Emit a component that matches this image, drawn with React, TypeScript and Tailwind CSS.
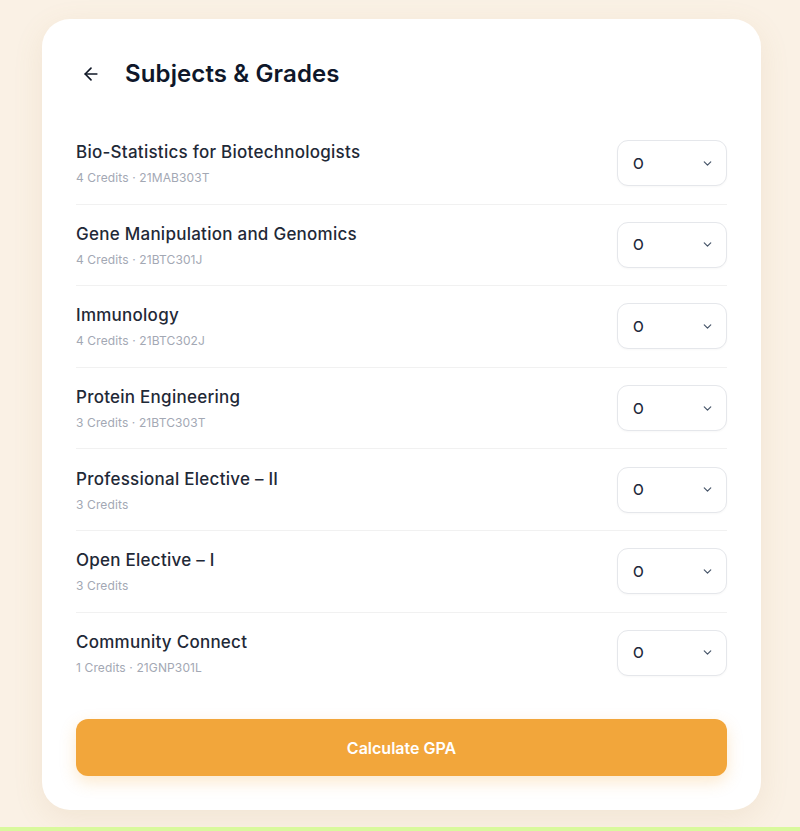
import { ArrowLeft, ChevronDown } from 'lucide-react'

type Subject = { name: string; credits: number; code?: string }

const subjects: Subject[] = [
  { name: 'Bio-Statistics for Biotechnologists', credits: 4, code: '21MAB303T' },
  { name: 'Gene Manipulation and Genomics', credits: 4, code: '21BTC301J' },
  { name: 'Immunology', credits: 4, code: '21BTC302J' },
  { name: 'Protein Engineering', credits: 3, code: '21BTC303T' },
  { name: 'Professional Elective – II', credits: 3 },
  { name: 'Open Elective – I', credits: 3 },
  { name: 'Community Connect', credits: 1, code: '21GNP301L' },
]

function GradeSelect() {
  return (
    <div className="flex h-[46px] w-[110px] items-center justify-between rounded-[11px] border border-[#e5e7eb] bg-white pl-[15px] pr-[12px] shadow-[0_1px_2px_rgba(0,0,0,0.03)]">
      <span className="text-[14px] font-medium text-[#1e293b]">O</span>
      <ChevronDown size={13} strokeWidth={2.2} className="text-[#475569]" />
    </div>
  )
}

export default function App() {
  return (
    <div className="flex min-h-[831px] flex-col bg-[#faf1e5] font-['Inter',sans-serif]">
      <div className="flex-1 px-[42px] pt-[19px]">
        <div className="w-[719px] rounded-[28px] bg-white px-[34px] pt-[37px] pb-[34px] shadow-[0_8px_30px_rgba(180,140,80,0.12)]">
          <div className="mb-[31px] flex items-center gap-[15px]">
            <button className="flex h-[32px] w-[34px] items-center justify-start pl-[5px] text-[#111827]">
              <ArrowLeft size={20} strokeWidth={2} />
            </button>
            <h1 className="text-[24px] font-semibold tracking-[0.005em] text-[#0f172a]">Subjects &amp; Grades</h1>
          </div>

          <div className="flex flex-col">
            {subjects.map((s, i) => (
              <div
                key={s.name}
                className={`flex items-center justify-between py-[17.3px] ${i < subjects.length - 1 ? 'border-b border-[#f1f1f1]' : ''}`}
              >
                <div className="mt-[2px] flex flex-col gap-[8px]">
                  <span className="text-[17px] font-medium leading-[20px] tracking-[0.015em] text-[#1f2937]">{s.name}</span>
                  <span className="text-[12px] leading-[16px] tracking-[0.01em] text-[#a3a8b4]">
                    {s.credits} Credits{s.code ? ` · ${s.code}` : ''}
                  </span>
                </div>
                <GradeSelect />
              </div>
            ))}
          </div>

          <button className="mt-[26px] flex h-[57px] w-full items-center justify-center rounded-[12px] bg-[#f2a63b] text-[16px] font-semibold text-white shadow-[0_6px_16px_rgba(242,166,59,0.25)]">
            Calculate GPA
          </button>
        </div>
      </div>
      <div className="mt-[16px] h-[4px] bg-[#d9f99d]" />
    </div>
  )
}
